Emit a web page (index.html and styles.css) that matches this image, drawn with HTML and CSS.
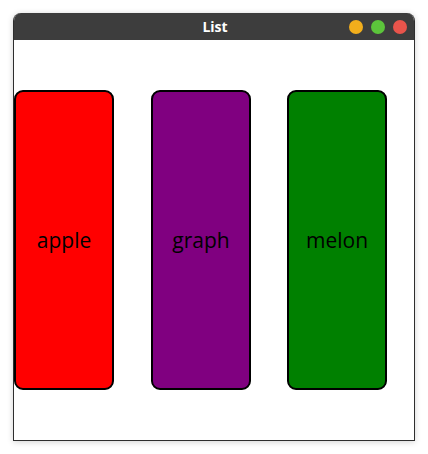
FILE: index.html
```html
<!DOCTYPE html>
<html lang="en">
<head>
  <meta charset="UTF-8" />
  <title>List</title>
  <link rel="stylesheet" href="styles.css">
</head>
<body>
  <div class="window">
    <div class="titlebar">
      <strong>List</strong>
      <div class="controls">
        <span class="dot min"></span>
        <span class="dot max"></span>
        <span class="dot close"></span>
      </div>
    </div>
    <div class="content">
      <div class="item red">apple</div>
      <div class="item purple">graph</div>
      <div class="item green">melon</div>
    </div>
  </div>
</body>
</html>
```

FILE: styles.css
```css
* { margin: 0; padding: 0; box-sizing: border-box; }
body {
  font-family: "Open Sans", "Noto Sans", sans-serif;
  background: #fff;
  width: 428px;
  height: 454px;
  padding: 13px 13px 0 13px;
}

.window {
  width: 402px;
  height: 428px;
  border: 1px solid #2e2e2e;
  border-top: none;
  border-radius: 8px 8px 0 0;
  background: #fff;
  box-shadow: 0 1px 6px rgba(0,0,0,0.18);
  display: flex;
  flex-direction: column;
  overflow: hidden;
}

.titlebar {
  height: 27px;
  background: #3d3d3d;
  position: relative;
  display: flex;
  align-items: center;
  justify-content: center;
  color: #fff;
  font-size: 14px;
}
.titlebar strong { font-weight: 700; margin-left: 2px; }

.controls {
  position: absolute;
  right: 7px;
  top: 7px;
  display: flex;
  gap: 8px;
}
.dot {
  width: 14px;
  height: 14px;
  border-radius: 50%;
}
.min { background: #f2ae1c; }
.max { background: #5cc43b; }
.close { background: #e9544b; }

.content {
  flex: 1;
  display: flex;
  align-items: flex-start;
  padding-top: 50px;
}

.item {
  flex-shrink: 0;
  width: 100px;
  height: 300px;
  border: 2px solid #000;
  border-radius: 9px;
  display: flex;
  align-items: center;
  justify-content: center;
  font-size: 21px;
  color: #000;
  margin-right: 37px;
}
.item:nth-child(2) { margin-right: 36px; }
.item:last-child { margin-right: 0; }
.red { background: #ff0000; }
.purple { background: #800080; }
.green { background: #008000; }
```
